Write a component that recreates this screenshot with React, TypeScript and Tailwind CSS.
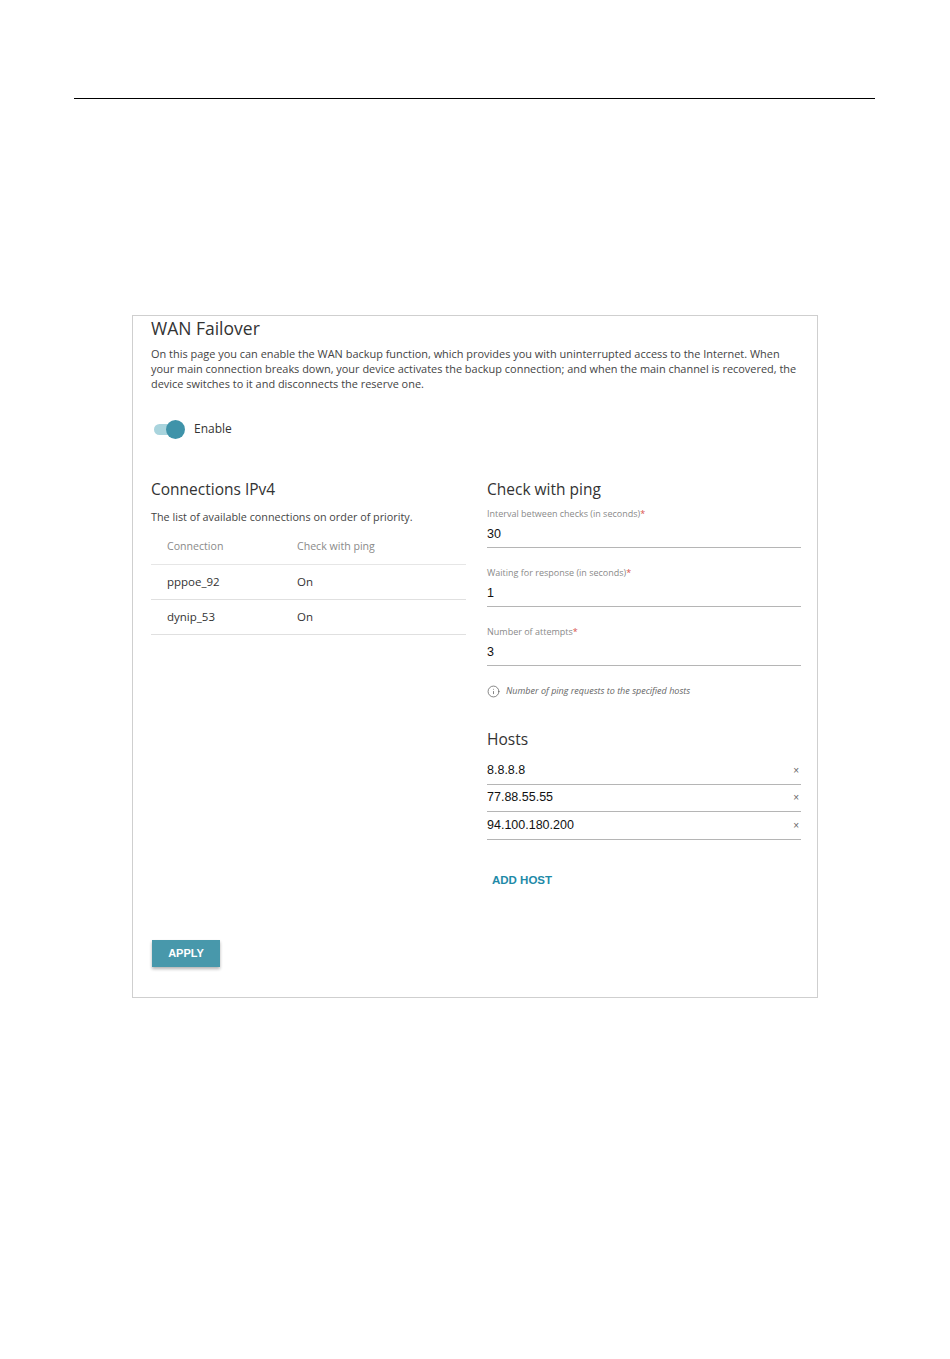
import { Info } from "lucide-react";

const hosts = ["8.8.8.8", "77.88.55.55", "94.100.180.200"];

const fields = [
  { label: "Interval between checks (in seconds)", value: "30" },
  { label: "Waiting for response (in seconds)", value: "1" },
  { label: "Number of attempts", value: "3" },
];

const connections = [
  { name: "pppoe_92", ping: "On" },
  { name: "dynip_53", ping: "On" },
];

export default function App() {
  return (
    <div className="min-h-[1359px] w-[950px] bg-white font-['Open_Sans',sans-serif] text-[#333]">
      <div className="pt-[98px] px-[74px]">
        <div className="h-px w-[801px] bg-black" />
      </div>

      {/* WAN Failover panel */}
      <section className="ml-[132px] mt-[216px] w-[686px] border border-[#cfcfcf] pl-[18px] pr-[15px] pb-[30px]">
        <h1 className="text-[17.5px] leading-[24px] text-[#333]">WAN Failover</h1>
        <p className="mt-[6px] whitespace-nowrap text-[10.95px] leading-[15px] text-[#444]">
          On this page you can enable the WAN backup function, which provides you with uninterrupted access to the Internet. When
          <br />
          your main connection breaks down, your device activates the backup connection; and when the main channel is recovered, the
          <br />
          device switches to it and disconnects the reserve one.
        </p>

        <div className="mt-[28px] flex h-[20px] items-center">
          <div className="relative ml-[3px] h-[11px] w-[26px] rounded-full bg-[#a9d4dd]">
            <div className="absolute -top-[4px] right-[-5px] h-[19px] w-[19px] rounded-full bg-[#3f93a9]" />
          </div>
          <span className="ml-[14px] text-[12px] text-[#333]">Enable</span>
        </div>

        <div className="mt-[39px] grid grid-cols-[315px_314px] gap-[21px]">
          {/* Connections */}
          <div>
            <h2 className="text-[15.5px] leading-[22px] text-[#333]">Connections IPv4</h2>
            <p className="mt-[9px] text-[10.8px] leading-[15px] text-[#444]">
              The list of available connections on order of priority.
            </p>
            <div className="mt-[6px]">
              <div className="flex h-[35px] items-center border-b border-[#e6e6e6] text-[10.6px] text-[#8a8a8a]">
                <span className="w-[146px] pl-[16px]">Connection</span>
                <span>Check with ping</span>
              </div>
              {connections.map((c) => (
                <div
                  key={c.name}
                  className="flex h-[35px] items-center border-b border-[#e0e0e0] text-[11.5px] text-[#333]"
                >
                  <span className="w-[146px] pl-[16px]">{c.name}</span>
                  <span>{c.ping}</span>
                </div>
              ))}
            </div>
          </div>

          {/* Check with ping */}
          <div>
            <h2 className="text-[15.5px] leading-[22px] text-[#333]">Check with ping</h2>
            <div className="mt-[8px] flex flex-col gap-[19px]">
              {fields.map((f) => (
                <div key={f.label} className="border-b border-[#b5b5b5] pb-[5px]">
                  <div className="text-[9px] leading-[12px] text-[#8a8a8a]">
                    {f.label}
                    <span className="text-[#d9534f]">*</span>
                  </div>
                  <div className="mt-[6px] font-['Liberation_Sans',Arial,sans-serif] text-[12.5px] leading-[16px] text-[#111]">
                    {f.value}
                  </div>
                </div>
              ))}
            </div>
            <div className="mt-[18px] flex h-[14px] items-center gap-[6px] text-[9px] italic text-[#666]">
              <Info size={13} strokeWidth={1.3} className="text-[#555]" />
              <span>Number of ping requests to the specified hosts</span>
            </div>

            <h2 className="mt-[30px] text-[15.5px] leading-[22px] text-[#333]">Hosts</h2>
            <div className="mt-[7px]">
              {hosts.map((h) => (
                <div
                  key={h}
                  className="flex h-[27.5px] items-center justify-between border-b border-[#b5b5b5] font-['Liberation_Sans',Arial,sans-serif] text-[12.5px] text-[#111]"
                >
                  <span>{h}</span>
                  <span className="pr-[2px] text-[10px] text-[#666]">×</span>
                </div>
              ))}
            </div>
            <button className="mt-[32px] pl-[5px] font-['Liberation_Sans',Arial,sans-serif] text-[11.5px] font-bold leading-[16px] text-[#1e8aa8]">
              ADD HOST
            </button>
          </div>
        </div>

        <button className="mt-[50px] ml-px h-[27px] w-[68px] bg-[#4898ab] font-['Liberation_Sans',Arial,sans-serif] text-[11px] font-bold text-white shadow-[0_2px_3px_rgba(0,0,0,0.3)]">
          APPLY
        </button>
      </section>
    </div>
  );
}
